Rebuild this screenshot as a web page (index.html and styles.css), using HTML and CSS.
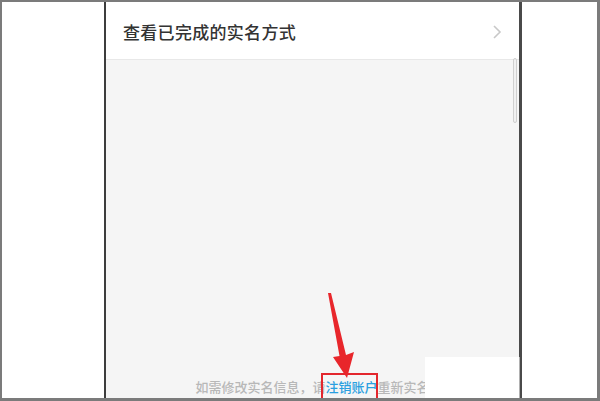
FILE: index.html
```html
<!DOCTYPE html>
<html lang="zh">
<head>
<meta charset="utf-8">
<link rel="stylesheet" href="styles.css">
</head>
<body>
<div class="frame">
  <div class="side side-left"></div>
  <div class="edge edge-left"></div>
  <div class="phone">
    <div class="row">
      <span class="row-title">查看已完成的实名方式</span>
      <svg class="chevron" width="10" height="16" viewBox="0 0 10 16"><path d="M2 2 L8 8 L2 14" fill="none" stroke="#c8c8c8" stroke-width="1.6"/></svg>
    </div>
    <div class="content">
      <div class="scrollbar"></div>
      <p class="note">如需修改实名信息，请<span class="link">注销账户</span>重新实名</p>
    </div>
  </div>
  <div class="edge edge-right"></div>
  <div class="side side-right"></div>
  <div class="patch"></div>
  <div class="mark-box"></div>
  <svg class="arrow" width="600" height="401" viewBox="0 0 600 401">
    <polygon points="328,293 331,293 346,355 354,352 347,378 333,357 339.5,356" fill="#e8262b"/>
  </svg>
</div>
</body>
</html>
```

FILE: styles.css
```css
html, body {
  margin: 0;
  padding: 0;
  background: #fff;
}
.frame {
  position: relative;
  width: 600px;
  height: 401px;
  box-sizing: border-box;
  border-top: 2px solid #7b7b7b;
  border-left: 2px solid #7b7b7b;
  border-right: 3px solid #7b7b7b;
  border-bottom: 3px solid #7b7b7b;
  display: flex;
  overflow: hidden;
  font-family: "Noto Sans CJK SC", "Noto Sans", sans-serif;
}
.side {
  background: #fff;
}
.side-left {
  width: 102px;
}
.side-right {
  flex: 1;
}
.edge-left {
  width: 2px;
  background: #3d3d3d;
}
.edge-right {
  width: 3px;
  background: #4a4a4a;
}
.phone {
  width: 413px;
  display: flex;
  flex-direction: column;
  background: #f5f5f5;
}
.row {
  height: 57px;
  background: #fff;
  border-bottom: 1px solid #e8e8e8;
  display: flex;
  align-items: center;
  justify-content: space-between;
  padding: 0 17px 0 17px;
}
.row-title {
  font-size: 17px;
  font-weight: 500;
  color: #333;
  letter-spacing: 0.3px;
  margin-top: 2px;
}
.chevron {
  margin-top: 2px;
}
.content {
  position: relative;
  flex: 1;
  display: flex;
  flex-direction: column;
  justify-content: flex-end;
}
.scrollbar {
  position: absolute;
  right: 2px;
  top: -2px;
  width: 2px;
  height: 63px;
  border: 1px solid #cfcfcf;
  border-radius: 2px;
  background: #f0f0f0;
}
.note {
  margin: 0 0 2px 0;
  text-align: center;
  font-size: 13px;
  font-weight: 500;
  line-height: 18px;
  color: #b8b8b8;
  white-space: nowrap;
}
.link {
  color: #2a9fe0;
}
.patch {
  position: absolute;
  left: 423px;
  top: 355px;
  width: 94px;
  height: 50px;
  background: #fff;
  border-right: 1px solid #b0b0b0;
}
.mark-box {
  position: absolute;
  left: 319px;
  top: 371px;
  width: 53px;
  height: 23px;
  border: 2px solid #e3262d;
}
.arrow {
  position: absolute;
  left: -2px;
  top: -2px;
}
```
